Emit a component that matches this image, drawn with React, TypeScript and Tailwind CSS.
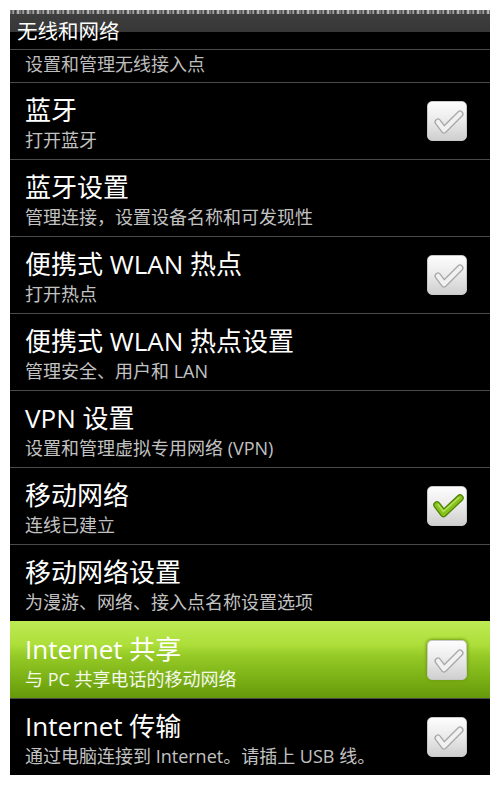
import { FC } from "react";

type Row = {
  title: string;
  sub: string;
  check?: "off" | "on";
  active?: boolean;
};

const rows: Row[] = [
  { title: "蓝牙", sub: "打开蓝牙", check: "off" },
  { title: "蓝牙设置", sub: "管理连接，设置设备名称和可发现性" },
  { title: "便携式 WLAN 热点", sub: "打开热点", check: "off" },
  { title: "便携式 WLAN 热点设置", sub: "管理安全、用户和 LAN" },
  { title: "VPN 设置", sub: "设置和管理虚拟专用网络 (VPN)" },
  { title: "移动网络", sub: "连线已建立", check: "on" },
  { title: "移动网络设置", sub: "为漫游、网络、接入点名称设置选项" },
  { title: "Internet 共享", sub: "与 PC 共享电话的移动网络", check: "off", active: true },
  { title: "Internet 传输", sub: "通过电脑连接到 Internet。请插上 USB 线。", check: "off" },
];

const CheckBox: FC<{ on: boolean; active?: boolean }> = ({ on, active }) => (
  <div
    className={`w-[40px] h-[40px] shrink-0 rounded-[5px] border border-[#c8c8c8] bg-[linear-gradient(to_bottom,#fdfdfd_0%,#ececec_45%,#cfcfcf_100%)] ${
      active ? "shadow-[0_0_3px_1px_#6f9e14]" : ""
    }`}
  >
    {on ? (
      <svg width="40" height="40" viewBox="0 0 40 40">
        <path d="M9 18 L15.5 26.5 L32 11" fill="none" stroke="#4f7f05" strokeWidth="7.5" strokeLinecap="round" strokeLinejoin="round" />
        <path d="M9 18 L15.5 26.5 L32 11" fill="none" stroke="#86c21b" strokeWidth="5" strokeLinecap="round" strokeLinejoin="round" />
        <path d="M10 17.5 L15.5 24.5 L31 10.5" fill="none" stroke="#b3e35a" strokeWidth="1.5" strokeLinecap="round" strokeLinejoin="round" />
      </svg>
    ) : (
      <svg width="40" height="40" viewBox="0 0 40 40">
        <path d="M10 20 L16 28 L32 12" fill="none" stroke="#a6a6a6" strokeWidth="7" strokeLinecap="round" strokeLinejoin="round" />
        <path d="M10 20 L16 28 L32 12" fill="none" stroke="#f1f1f1" strokeWidth="4.5" strokeLinecap="round" strokeLinejoin="round" />
      </svg>
    )}
  </div>
);

const App: FC = () => {
  return (
    <div
      className="w-[500px] h-[794px] bg-white pt-[10px] px-[10px] overflow-hidden"
      style={{ fontFamily: '"Open Sans", "Noto Sans CJK SC", sans-serif' }}
    >
      <div className="w-[480px] h-[765px] bg-black flex flex-col">
        {/* 状态栏残影 */}
        <div className="h-[4px] bg-[repeating-linear-gradient(90deg,#8a8a8a_0px,#3a3a3a_2px,#c4c4c4_3px,#2e2e2e_5px,#777_7px,#e0e0e0_8px,#444_10px)]" />

        {/* 标题栏 */}
        <div className="h-[35px] bg-[linear-gradient(to_bottom,#3e3e3e_0px,#373737_18px,#000_18px,#000_100%)] pl-[7px] text-[20.5px] leading-[35px] text-white">
          无线和网络
        </div>

        <div className="h-[33px] border-t border-[#4a4a4a] pl-[15px] text-[18px] leading-[28px] text-[#bdbdbd]">
          设置和管理无线接入点
        </div>

        {rows.map((r) => (
          <div
            key={r.title}
            className={`h-[77px] flex items-center pl-[15px] pr-[23px] ${
              r.active
                ? "bg-[linear-gradient(to_bottom,#bdea55_0%,#aedf3a_30%,#94c926_46%,#7fb518_70%,#66990a_100%)]"
                : "border-t border-[#4a4a4a]"
            }`}
          >
            <div className="flex-1 flex flex-col pt-[8px]">
              <div className="text-[26px] leading-[30px] text-white">{r.title}</div>
              <div className={`text-[18px] leading-[30px] ${r.active ? "text-[#f4f8ea]" : "text-[#c2c2c2]"}`}>
                {r.sub}
              </div>
            </div>
            {r.check && <CheckBox on={r.check === "on"} active={r.active} />}
          </div>
        ))}
      </div>
    </div>
  );
};

export default App;
